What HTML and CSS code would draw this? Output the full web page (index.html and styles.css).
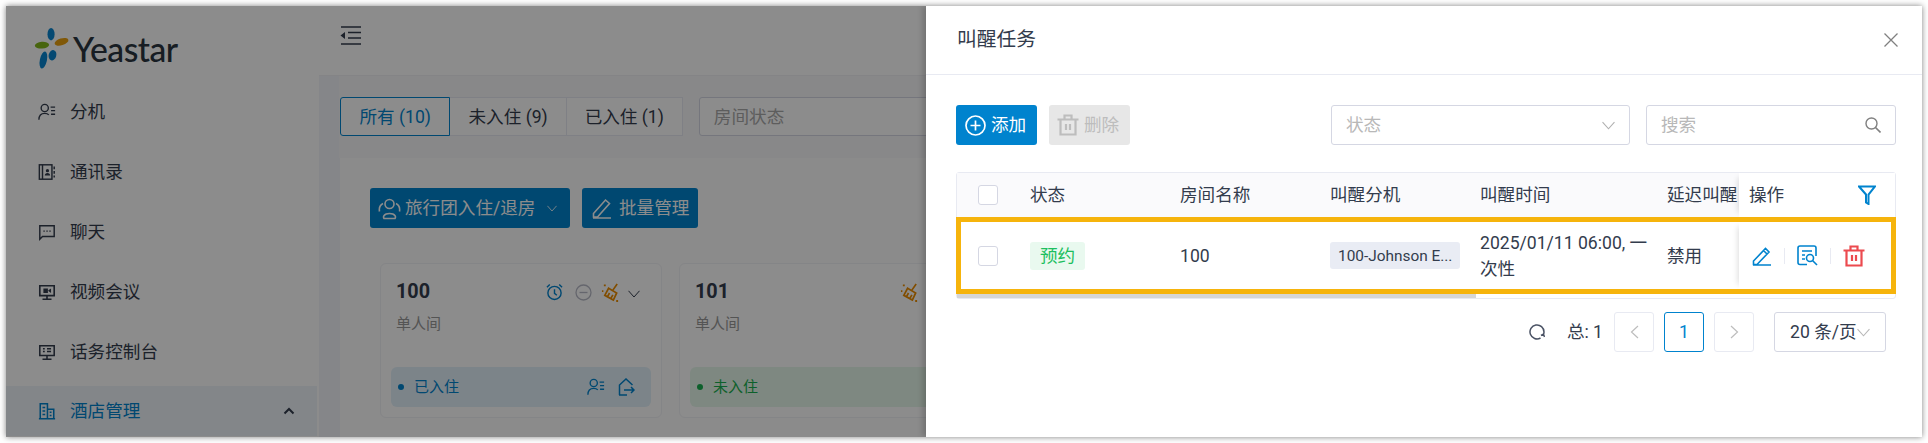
FILE: index.html
```html
<!DOCTYPE html>
<html lang="zh-CN">
    <head>
        <meta charset="UTF-8">
        <title>叫醒任务</title>
        <link rel="stylesheet" href="styles.css">
    </head>
    <body>
        <svg class="sprite">
            <symbol id="chevron" viewBox="0 0 12 8"><path d="M.5.8 6 7 11.5.8" fill="none" stroke="currentColor"/></symbol>
            <symbol id="user-list" viewBox="0 0 20 20"><g fill="none" stroke="currentColor" stroke-width="1.5"><circle cx="7.5" cy="5.5" r="4"/><path d="M1 18.500c0-4.500 2.500-7 6.500-7 2 0 3.500.6 4.500 1.700M14 4.500h5M14.500 8.500h4.500M14.500 12.500h4.500"/></g></symbol>
            <symbol id="trash" viewBox="0 0 22 22"><g fill="none" stroke="currentColor" stroke-width="2.200"><path d="M.5 5.500h21M7.500 5V1.500h7V5M3.500 6v14.500h15V6M9 10v6M13 10v6"/></g></symbol>
            <symbol id="broom" viewBox="0 0 20 20"><g fill="none" stroke="currentColor" stroke-width="1.800"><path d="M17 1l-4.500 6.500M8 5.500l8.500 5-3.500 7.500-9-5zM9 10.500l-2 3.500M12.500 12.500l-2 3.500"/><path d="M3 2.500h2M1 8.500h1.500M16 19h2" stroke-width="2"/></g></symbol>
        </svg>
        <div class="frame">
            <aside class="sidebar">
                <div class="logo">
                    <svg class="logo__mark" width="36" height="42" viewBox="0 0 36 44">
                        <ellipse cx="17" cy="6.500" rx="3.700" ry="6.500" fill="#0a86d0"/>
                        <ellipse cx="7.500" cy="18" rx="7.500" ry="3.500" fill="#83b81b" transform="rotate(-4 7.500 18)"/>
                        <ellipse cx="28" cy="14.500" rx="7.500" ry="3.600" fill="#eaa010" transform="rotate(-18 28 14.500)"/>
                        <ellipse cx="18.500" cy="28.500" rx="4" ry="5.500" fill="#0a86d0" transform="rotate(15 18.500 28.500)"/>
                        <ellipse cx="9" cy="33.500" rx="3.700" ry="9" fill="#0a86d0" transform="rotate(12 9 33.500)"/>
                    </svg>
                    <span class="logo__text">Yeastar</span>
                </div>
                <nav class="menu">
                    <a class="menu__item">
                        <svg class="menu__icon" viewBox="0 0 20 20"><use href="#user-list"/></svg>
                        分机
                    </a>
                    <a class="menu__item">
                        <svg class="menu__icon" viewBox="0 0 20 20"><g fill="none" stroke="currentColor" stroke-width="1.600"><rect x="1.500" y="2" width="14" height="16"/><path d="M5 2v16M18 4v3M18 9v3M18 14v2"/></g><circle cx="10.500" cy="8.500" r="1.800" fill="currentColor"/><path d="M7.500 14c0-2 1.300-3 3-3s3 1 3 3z" fill="currentColor"/></svg>
                        通讯录
                    </a>
                    <a class="menu__item">
                        <svg class="menu__icon" viewBox="0 0 20 20"><path d="M2 3h16v12H5l-3 3z" fill="none" stroke="currentColor" stroke-width="1.600"/><path d="M6 9h1.500M9.300 9h1.500M12.600 9h1.500" stroke="currentColor" stroke-width="1.600"/></svg>
                        聊天
                    </a>
                    <a class="menu__item">
                        <svg class="menu__icon" viewBox="0 0 20 20"><path d="M2 3h16v11H2zM10 14v4M5 18h10" fill="none" stroke="currentColor" stroke-width="1.800"/><path d="M6 6h5v5H6zM11.500 8l3-2v5l-3-2z" fill="currentColor"/></svg>
                        视频会议
                    </a>
                    <a class="menu__item">
                        <svg class="menu__icon" viewBox="0 0 20 20"><path d="M2 3h16v11H2zM10 14v4M5 18h10M5.500 6.500h2M5.500 9.500h2M10 6.500h4.500M10 9.500h4.500" fill="none" stroke="currentColor" stroke-width="1.700"/></svg>
                        话务控制台
                    </a>
                    <a class="menu__item menu__item--active">
                        <svg class="menu__icon" viewBox="0 0 20 20"><path d="M2.500 18.500V2h8v16.500M10.500 8h7v10.500M1 18.500h18M5 6h3M5 10h3M5 14h3M13 11.500h2M13 15h2" fill="none" stroke="currentColor" stroke-width="1.700"/></svg>
                        酒店管理
                        <svg class="menu__arrow" width="12" height="8" viewBox="0 0 12 8"><path d="M1.500 6.500 6 2l4.500 4.500" fill="none" stroke="#333c4d" stroke-width="2"/></svg>
                    </a>
                </nav>
            </aside>

            <main class="main">
                <header class="topbar">
                    <svg width="21" height="19" viewBox="0 0 21 19"><path d="M1 1h20M8 6.500h13M8 12h13M1 18h20" stroke="#333c4d" stroke-width="1.500"/><path d="M5 6v7L.5 9.500z" fill="#333c4d"/></svg>
                </header>
                <section class="content">
                    <div class="filters">
                        <div class="tabs">
                            <span class="tabs__item tabs__item--active">所有 (10)</span>
                            <span class="tabs__item">未入住 (9)</span>
                            <span class="tabs__item">已入住 (1)</span>
                        </div>
                        <div class="filters__select">房间状态</div>
                    </div>
                    <div class="rooms">
                        <div class="rooms__actions">
                            <span class="btn btn--group">
                                <svg width="23" height="23" viewBox="0 0 23 23"><g fill="none" stroke="currentColor" stroke-width="1.600"><circle cx="11.500" cy="7" r="4.500"/><path d="M6 21.500c-1-1.500-.5-5 5.500-5s6.500 3.500 5.500 5zM5 6.500c-3 1.500-4 5-3.500 8M18 6.500c3 1.500 4 5 3.500 8"/></g></svg>
                                旅行团入住/退房
                                <svg class="btn__arrow" width="10" height="7"><use href="#chevron"/></svg>
                            </span>
                            <span class="btn btn--batch">
                                <svg width="20" height="21" viewBox="0 0 20 21"><path d="M1.500 15.500 13.500 2l4 3.500-12 13.500h-4zM1 20h18" fill="none" stroke="currentColor" stroke-width="1.600"/></svg>
                                批量管理
                            </span>
                        </div>
                        <div class="rooms__grid">
                            <article class="room">
                                <div class="room__head">
                                    <span class="room__name">100</span>
                                    <span class="room__icons">
                                        <svg class="room__clock" width="17" height="18" viewBox="0 0 18 18"><g fill="none" stroke="currentColor" stroke-width="1.500"><circle cx="9" cy="10" r="7"/><path d="M9 6v4.500l2.500 2M1 4l3-3M17 4l-3-3"/></g></svg>
                                        <svg class="room__ban" width="17" height="17" viewBox="0 0 17 17"><g fill="none" stroke="currentColor" stroke-width="1.300"><circle cx="8.500" cy="8.500" r="7.500"/><path d="M4.500 8.500h8"/></g></svg>
                                        <svg class="room__broom" width="19" height="19"><use href="#broom"/></svg>
                                        <svg class="room__arrow" width="12" height="8"><use href="#chevron"/></svg>
                                    </span>
                                </div>
                                <div class="room__type">单人间</div>
                                <div class="room__status room__status--in">
                                    <i class="room__dot"></i>已入住
                                    <span class="room__tools">
                                        <svg width="18" height="18"><use href="#user-list"/></svg>
                                        <svg width="18" height="18" viewBox="0 0 18 18"><path d="M2.500 17V7L9 1l6.500 6M2 17h8M2.500 9v8M7 12h10M14 9l3 3-3 3" fill="none" stroke="currentColor" stroke-width="1.500"/></svg>
                                    </span>
                                </div>
                            </article>
                            <article class="room">
                                <div class="room__head">
                                    <span class="room__name">101</span>
                                    <span class="room__icons">
                                        <svg class="room__broom" width="19" height="19"><use href="#broom"/></svg>
                                        <svg class="room__arrow" width="12" height="8"><use href="#chevron"/></svg>
                                    </span>
                                </div>
                                <div class="room__type">单人间</div>
                                <div class="room__status room__status--free">
                                    <i class="room__dot"></i>未入住
                                </div>
                            </article>
                            <article class="room"></article>
                            <article class="room"></article>
                        </div>
                    </div>
                </section>
            </main>

            <div class="mask"></div>

            <section class="drawer">
                <header class="drawer__head">
                    <h2 class="drawer__title">叫醒任务</h2>
                    <svg class="drawer__close" width="14" height="14" viewBox="0 0 14 14"><path d="M.5.500l13 13M13.500.500l-13 13" stroke="#808080" stroke-width="1.300"/></svg>
                </header>
                <div class="drawer__body">
                    <div class="toolbar">
                        <span class="btn btn--add">
                            <svg width="21" height="21" viewBox="0 0 21 21"><g fill="none" stroke="currentColor" stroke-width="1.700"><circle cx="10.500" cy="10.500" r="9.500"/><path d="M5.500 10.500h10M10.500 5.500v10"/></g></svg>
                            添加
                        </span>
                        <span class="btn btn--disabled">
                            <svg width="22" height="22"><use href="#trash"/></svg>
                            删除
                        </span>
                        <div class="field field--status">
                            状态
                            <svg class="field__arrow" width="13" height="9"><use href="#chevron"/></svg>
                        </div>
                        <div class="field field--search">
                            搜索
                            <svg width="16" height="16" viewBox="0 0 16 16"><circle cx="6.500" cy="6.500" r="5.500" fill="none" stroke="#808080" stroke-width="1.400"/><path d="m10.500 10.500 5 5" stroke="#808080" stroke-width="1.600"/></svg>
                        </div>
                    </div>

                    <div class="table">
                        <div class="table__head">
                            <span class="checkbox"></span>
                            <span>状态</span>
                            <span>房间名称</span>
                            <span>叫醒分机</span>
                            <span>叫醒时间</span>
                            <span>延迟叫醒</span>
                            <span class="table__fixed">
                                操作
                                <svg width="18" height="20" viewBox="0 0 18 20"><path d="M1 1.500h16l-6.500 8V19L8 17.500v-8z" fill="none" stroke="#0083ce" stroke-width="2"/></svg>
                            </span>
                        </div>
                        <div class="table__row">
                            <span class="checkbox"></span>
                            <span><em class="tag tag--booked">预约</em></span>
                            <span>100</span>
                            <span><em class="tag tag--ext">100-Johnson E...</em></span>
                            <span class="table__time">2025/01/11 06:00, 一次性</span>
                            <span>禁用</span>
                            <span class="table__fixed table__fixed--row">
                                <svg class="icon--blue" width="20" height="20" viewBox="0 0 20 20"><path d="M1.500 15 13.500 2.500l3.500 3.500L5 18.500H1.500zM11.500 4.500l3.500 3.500M1 19h18" fill="none" stroke="currentColor" stroke-width="1.600"/></svg>
                                <i class="table__sep"></i>
                                <svg class="icon--blue" width="21" height="21" viewBox="0 0 21 21"><g fill="none" stroke="currentColor" stroke-width="1.600"><path d="M10 19.500H3a2 2 0 0 1-2-2V3a2 2 0 0 1 2-2h14a2 2 0 0 1 2 2v8M5 6h10M5 10h3M5 14h3"/><circle cx="13" cy="13" r="3.500"/><path d="m15.500 15.500 4.500 4.500"/></g></svg>
                                <i class="table__sep"></i>
                                <svg class="icon--red" width="22" height="22"><use href="#trash"/></svg>
                            </span>
                        </div>
                        <div class="table__scroll"><div class="table__thumb"></div></div>
                    </div>

                    <div class="pager">
                        <svg class="pager__refresh" width="16" height="16" viewBox="0 0 16 16"><path d="M11.500 14A7 7 0 1 1 15 8c0 1-.2 1.700-.5 2.500M15.500 13l-1-3-2.500 1.500" fill="none" stroke="#4a5264" stroke-width="1.500"/></svg>
                        <span class="pager__total">总: 1</span>
                        <span class="pager__btn pager__btn--off"><svg width="9" height="14" viewBox="0 0 9 14"><path d="M8 1 1.500 7 8 13" fill="none" stroke="currentColor" stroke-width="1.200"/></svg></span>
                        <span class="pager__btn pager__btn--active">1</span>
                        <span class="pager__btn pager__btn--off"><svg width="9" height="14" viewBox="0 0 9 14"><path d="M1 1l6.500 6L1 13" fill="none" stroke="currentColor" stroke-width="1.200"/></svg></span>
                        <span class="pager__size">
                            20 条/页
                            <svg width="13" height="9"><use href="#chevron"/></svg>
                        </span>
                    </div>
                </div>
            </section>
        </div>
    </body>
</html>
```

FILE: styles.css
```css
:root{
    --blue: #0083ce;
    --text: #333c4d;
    --line: #d5d7e3;
    --line-soft: #e8eaf2;
}

html, body{
    margin: 0;
    background: #fff;
}

body{
    height: 443px;
    overflow: hidden;
    font-family: Roboto, "Noto Sans CJK SC", sans-serif;
    font-size: 17.6px;
    line-height: 22px;
    color: var(--text);
}

.sprite{
    display: none;
}

.frame{
    position: relative;
    display: flex;
    width: 1916px;
    height: 431px;
    margin: 6px;
    overflow: hidden;
    background: #fff;
    box-shadow: 0 0 6px rgba(0, 0, 0, .5);
}

.sidebar{
    flex: 0 0 313px;
    background: #fff;
}

.logo{
    display: flex;
    align-items: center;
    height: 81px;
    padding: 5px 0 0 28px;
    box-sizing: border-box;
}

.logo__text{
    margin-left: 3px;
    font-family: Lato, sans-serif;
    font-size: 33.700px;
    line-height: 40px;
    font-weight: 500;
    letter-spacing: -.5px;
    color: #2b3640;
}

.menu{
    display: flex;
    flex-direction: column;
    gap: 10px;
}

.menu__item{
    display: flex;
    align-items: center;
    gap: 14px;
    height: 50px;
    margin-right: 2px;
    padding-left: 32px;
}

.menu__icon{
    width: 18px;
    height: 18px;
    flex: none;
}

.menu__item--active{
    margin-top: -1px;
    background: #eef4f9;
    color: var(--blue);
}

.menu__arrow{
    margin-left: auto;
    margin-right: 22px;
}

.main{
    flex: 1;
    display: flex;
    flex-direction: column;
    min-width: 0;
}

.topbar{
    flex: 0 0 70px;
    display: flex;
    align-items: center;
    padding: 0 0 10px 21px;
    box-sizing: border-box;
    background: #fff;
    border-bottom: 1px solid #f0f1f5;
}

.content{
    flex: 1;
    padding-left: 21px;
    background: #f2f4f9;
}

.filters{
    display: flex;
    gap: 16px;
    margin-left: -1px;
    padding: 21px 0 22px 1px;
    background: #f8f8fa;
}

.tabs{
    display: flex;
    height: 39px;
    background: #fff;
    border-radius: 3px;
}

.tabs__item{
    display: flex;
    align-items: center;
    padding: 0 18px;
    border: 1px solid var(--line-soft);
    border-left: 0;
}

.tabs__item--active{
    padding: 0 18.500px;
    border: 1px solid var(--blue);
    border-radius: 3px 0 0 3px;
    color: var(--blue);
}

.filters__select{
    display: flex;
    align-items: center;
    width: 300px;
    height: 39px;
    padding-left: 14px;
    box-sizing: border-box;
    background: #fff;
    border: 1px solid var(--line);
    border-radius: 3px;
    color: #aaa;
}

.rooms{
    height: 300px;
    padding: 30px 0 0 30px;
    background: #fdfdfd;
}

.rooms__actions{
    display: flex;
    gap: 12px;
    margin-bottom: 35px;
}

.rooms__grid{
    display: grid;
    grid-template-columns: repeat(4, 282px);
    gap: 17px;
    margin-left: 10px;
}

.btn{
    display: flex;
    align-items: center;
    height: 40px;
    box-sizing: border-box;
    border-radius: 3px;
    background: var(--blue);
    color: #fff;
    white-space: nowrap;
}

.btn--group{
    width: 200px;
    padding-left: 8px;
    gap: 4px;
}

.btn__arrow{
    margin-left: 8px;
}

.btn--batch{
    width: 116px;
    padding-left: 10px;
    gap: 7px;
}

.btn--add{
    width: 81px;
    padding-left: 9px;
    gap: 5px;
}

.btn--disabled{
    width: 81px;
    margin-left: 12px;
    padding-left: 8px;
    gap: 5px;
    background: #e7e7e7;
    color: #bdbdbd;
}

.room{
    display: flex;
    flex-direction: column;
    height: 155px;
    padding: 0 10px 10px;
    box-sizing: border-box;
    background: #fff;
    border: 1px solid #f1f2f6;
    border-radius: 6px;
}

.room__head{
    display: flex;
    align-items: center;
    justify-content: space-between;
    padding: 16px 11px 0 5px;
}

.room__name{
    font-size: 19.800px;
    font-weight: 700;
    line-height: 24px;
}

.room__icons{
    display: flex;
    align-items: center;
    gap: 8px;
}

.room__clock{
    color: var(--blue);
}

.room__ban{
    margin-left: 4px;
    color: #b9bbc7;
}

.room__broom{
    margin-left: 1px;
    color: #ec8d00;
}

.room__arrow{
    margin-top: 3px;
}

.room__type{
    margin: 9px 0 0 5px;
    font-size: 15px;
    color: #999;
}

.room__status{
    display: flex;
    align-items: center;
    gap: 10px;
    height: 40px;
    margin-top: auto;
    padding: 0 16px 0 7px;
    border-radius: 6px;
    font-size: 15px;
}

.room__status--in{
    background: #e2f1fa;
    color: var(--blue);
}

.room__status--free{
    background: #e6f7ec;
    color: #19b04f;
}

.room__dot{
    width: 6px;
    height: 6px;
    border-radius: 50%;
    background: currentColor;
}

.room__tools{
    display: flex;
    gap: 12px;
    margin-left: auto;
}

.mask{
    position: absolute;
    inset: 0;
    background: rgba(0, 0, 0, .45);
}

.drawer{
    position: absolute;
    top: 0;
    right: 0;
    bottom: 0;
    width: 996px;
    background: #fff;
    box-shadow: -3px 0 6px rgba(0, 0, 0, .2);
}

.drawer__head{
    display: flex;
    align-items: center;
    justify-content: space-between;
    height: 69px;
    padding: 0 24px 0 31px;
    box-sizing: border-box;
    border-bottom: 1px solid var(--line-soft);
}

.drawer__title{
    margin: 0;
    font-size: 19.800px;
    font-weight: 400;
}

.drawer__body{
    padding: 30px 26px 0 30px;
}

.toolbar{
    display: flex;
}

.field{
    display: flex;
    align-items: center;
    justify-content: space-between;
    height: 40px;
    padding: 0 14px;
    box-sizing: border-box;
    background: #fff;
    border: 1px solid var(--line);
    border-radius: 3px;
    color: #b8b8b8;
}

.field--status{
    width: 299px;
    margin-left: auto;
}

.field--search{
    width: 250px;
    margin-left: 16px;
}

.field__arrow{
    color: #b0b0b0;
}

.table{
    margin-top: 27px;
    border: 1px solid var(--line-soft);
    border-radius: 3px;
}

.table__head, .table__row{
    display: grid;
    align-items: center;
}

.table__head{
    grid-template-columns: 73px 150px 150px 150px 187px 72px 156px;
    height: 44px;
    background: #fafafc;
}

.table__row{
    grid-template-columns: 69px 150px 150px 150px 187px 72px 152px;
    height: 77px;
    margin: 0 -1px;
    box-sizing: border-box;
    background: #fff;
    border: 5px solid #f6b40c;
}

.table__head .checkbox{
    margin-left: 21px;
}

.table__row .checkbox{
    margin-left: 17px;
}

.checkbox{
    display: block;
    width: 20px;
    height: 20px;
    box-sizing: border-box;
    border: 1px solid var(--line);
    border-radius: 3px;
    background: #fff;
}

.table__time{
    max-width: 172px;
    line-height: 26px;
}

.table__fixed{
    display: flex;
    align-items: center;
    justify-content: space-between;
    height: 100%;
    padding: 0 19px 0 10px;
    box-sizing: border-box;
    background: #fff;
    box-shadow: -6px 0 6px -5px rgba(0, 0, 0, .14);
}

.table__fixed--row{
    justify-content: flex-start;
    padding: 0 0 0 13px;
    gap: 12px;
}

.table__sep{
    width: 1px;
    height: 16px;
    background: var(--line-soft);
}

.icon--blue{
    color: var(--blue);
}

.icon--red{
    color: #ec4a4f;
}

.tag{
    display: inline-flex;
    align-items: center;
    height: 27px;
    border-radius: 3px;
    font-style: normal;
    white-space: nowrap;
}

.tag--booked{
    width: 55px;
    height: 28px;
    justify-content: center;
    background: #e9f9ef;
    color: #1dbf60;
}

.tag--ext{
    width: 130px;
    padding-left: 8px;
    box-sizing: border-box;
    background: #e9ecf4;
    font-size: 15.400px;
}

.table__scroll{
    height: 4px;
}

.table__thumb{
    width: 519px;
    height: 4px;
    background: #d6d6d6;
}

.pager{
    display: flex;
    align-items: center;
    justify-content: flex-end;
    gap: 10px;
    margin-top: 13px;
    padding-right: 10px;
}

.pager__refresh{
    margin-right: 12px;
}

.pager__total{
    margin-right: 1px;
}

.pager__btn{
    display: flex;
    align-items: center;
    justify-content: center;
    width: 40px;
    height: 40px;
    box-sizing: border-box;
    border: 1px solid var(--line-soft);
    border-radius: 3px;
}

.pager__btn--off{
    color: #bdbdbd;
}

.pager__btn--active{
    border-color: var(--blue);
    color: var(--blue);
}

.pager__size{
    display: flex;
    align-items: center;
    justify-content: space-between;
    width: 112px;
    height: 40px;
    margin-left: 10px;
    padding: 0 15px;
    box-sizing: border-box;
    border: 1px solid var(--line);
    border-radius: 3px;
    white-space: nowrap;
}

.pager__size svg{
    flex: none;
    color: #b8b8b8;
}
```
